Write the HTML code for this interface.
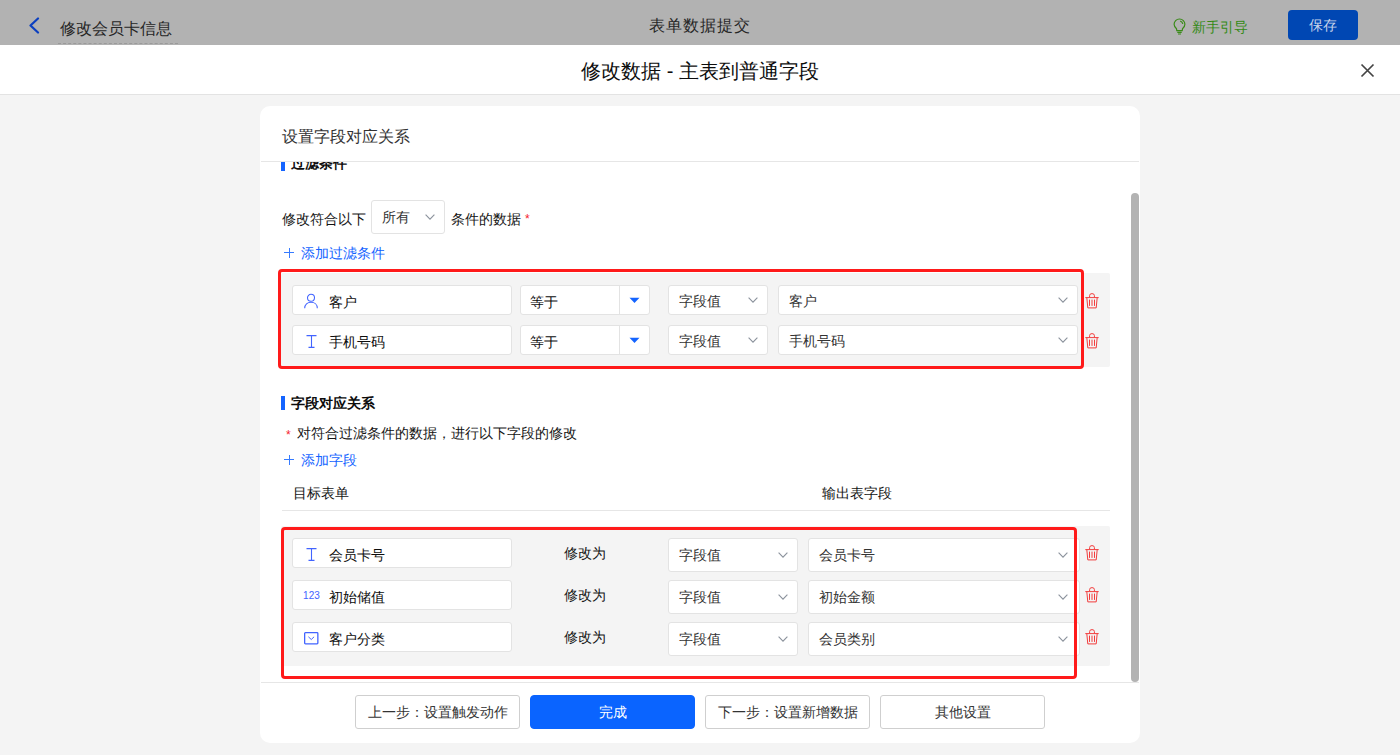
<!DOCTYPE html>
<html><head><meta charset="utf-8">
<style>
*{margin:0;padding:0;box-sizing:border-box}
html,body{width:1400px;height:755px;overflow:hidden;background:#f4f4f4;font-family:"Liberation Sans",sans-serif;color:#141414}
.a{position:absolute}
.t{position:absolute;white-space:nowrap;line-height:20px;font-size:14px}
#topbar{left:0;top:0;width:1400px;height:45px;background:#b2b2b2}
#mhead{left:0;top:45px;width:1400px;height:50px;background:#fff;border-bottom:1px solid #e3e3e3}
#card{left:260px;top:106px;width:880px;height:637px;background:#fff;border-radius:10px;overflow:hidden}
.inp{position:absolute;background:#fff;border:1px solid #e3e3e3;border-radius:3px;height:30px}
.sel{position:absolute;background:#fff;border:1px solid #e3e3e3;border-radius:3px;height:30px}
.rowbg{position:absolute;background:#f4f4f4;border-radius:2px}
.red{position:absolute;border:3px solid #ff1a1a;border-radius:4px}
.btn{position:absolute;top:695px;width:165px;height:34px;border:1px solid #cfcfcf;border-radius:3px;background:#fff;font-size:14px;line-height:32px;text-align:center;color:#333}
.blue{color:#1464ff}
</style></head><body>
<div id="topbar" class="a">
  <svg class="a" style="left:28px;top:17px" width="12" height="17" viewBox="0 0 12 17"><path d="M10 1.5 L2.5 8.5 L10 15.5" fill="none" stroke="#0b3fc0" stroke-width="2.2" stroke-linecap="round" stroke-linejoin="round"/></svg>
  <div class="t" style="left:60px;top:18px;font-size:16px;line-height:22px;color:#262626">修改会员卡信息</div>
  <div class="a" style="left:58px;top:43px;width:120px;border-top:1px dashed #9a9a9a"></div>
  <div class="t" style="left:649px;top:15px;font-size:16px;line-height:22px;letter-spacing:1px;color:#262626">表单数据提交</div>
  <svg class="a" style="left:1173px;top:18px" width="13" height="17" viewBox="0 0 13 17"><path d="M6.5 1 C3.4 1 1.1 3.4 1.1 6.3 C1.1 8.3 2.3 9.7 3.5 10.8 L3.8 12.6 L9.2 12.6 L9.5 10.8 C10.7 9.7 11.9 8.3 11.9 6.3 C11.9 3.4 9.6 1 6.5 1 Z M7.2 3.1 C8.6 3.5 9.6 4.6 9.8 6 M4.3 14.3 L8.7 14.3 M5 16 L8 16" fill="none" stroke="#3a8a18" stroke-width="1.2"/></svg>
  <div class="t" style="left:1192px;top:17px;color:#348a14">新手引导</div>
  <div class="a" style="left:1288px;top:10px;width:70px;height:30px;background:#0047b3;border-radius:4px;color:#c8d4ea;font-size:14px;line-height:30px;text-align:center">保存</div>
</div>
<div id="mhead" class="a">
  <div class="t" style="left:0;width:1400px;text-align:center;top:12px;font-size:20px;line-height:28px;color:#0d0d0d">修改数据 - 主表到普通字段</div>
  <svg class="a" style="left:1360px;top:18px" width="15" height="15" viewBox="0 0 15 15"><path d="M1.5 1.5 L13.5 13.5 M13.5 1.5 L1.5 13.5" stroke="#444" stroke-width="1.7"/></svg>
</div>
<div id="card" class="a">
  <div class="t" style="left:22px;top:19px;font-size:16px;line-height:24px;color:#333">设置字段对应关系</div>
  <div class="a" style="left:1px;top:55px;width:878px;height:1px;background:#e6e6e6"></div>
  <div class="a" style="left:1px;top:576px;width:878px;height:1px;background:#e6e6e6"></div>
</div>
<div class="a" style="left:260px;top:162px;width:880px;height:520px;overflow:hidden">
 <div class="a" style="left:-260px;top:-162px;width:1400px;height:755px">
  <div class="a" style="left:281px;top:157px;width:4px;height:14px;background:#1464ff"></div>
  <div class="t" style="left:291px;top:153px;font-weight:bold;color:#0d0d0d">过滤条件</div>
  <div class="t" style="left:282px;top:209px;color:#141414">修改符合以下</div>
  <div class="sel" style="left:371px;top:200px;width:74px;height:34px"></div>
  <div class="t" style="left:382px;top:207px;color:#333">所有</div>
  <svg class="a" style="left:425px;top:214px" width="10" height="6" viewBox="0 0 10 6"><path d="M0.6 0.6 L5.0 5.2 L9.4 0.6" fill="none" stroke="#8b929c" stroke-width="1.1"/></svg>
  <div class="t" style="left:451px;top:209px;color:#141414">条件的数据</div>
  <div class="t" style="left:525px;top:209px;color:#f5222d;font-size:12px">*</div>
  <svg class="a" style="left:284px;top:248px" width="11" height="10" viewBox="0 0 11 10"><path d="M0 4.5 H10 M5.5 0 V10" stroke="#1464ff" stroke-width="1" opacity="0.85"/></svg>
  <div class="t blue" style="left:301px;top:243px">添加过滤条件</div>
  <div class="rowbg" style="left:281px;top:273px;width:829px;height:94px"></div>
  <div class="inp" style="left:292px;top:285px;width:220px"></div>
  <svg class="a" style="left:303px;top:293px" width="16" height="16" viewBox="0 0 16 16"><circle cx="8" cy="4.8" r="3.5" fill="none" stroke="#4264ff" stroke-width="1.05"/><path d="M1.7 15.3 C1.7 11.6 4.4 9.3 8 9.3 C11.6 9.3 14.3 11.6 14.3 15.3" fill="none" stroke="#4264ff" stroke-width="1.05"/></svg>
  <div class="t" style="left:329px;top:292px;color:#0d0d0d">客户</div>
  <div class="sel" style="left:520px;top:285px;width:130px"></div>
  <div class="a" style="left:619px;top:286px;width:1px;height:28px;background:#e3e3e3"></div>
  <div class="t" style="left:530px;top:292px;color:#0d0d0d">等于</div>
  <svg class="a" style="left:629px;top:297px" width="11" height="7" viewBox="0 0 11 7"><path d="M0.5 0.8 H10.5 L5.5 6 Z" fill="#1464ff"/></svg>
  <div class="sel" style="left:668px;top:285px;width:100px"></div>
  <div class="t" style="left:679px;top:291px;color:#333">字段值</div>
  <svg class="a" style="left:748px;top:297px" width="10" height="6" viewBox="0 0 10 6"><path d="M0.6 0.6 L5.0 5.2 L9.4 0.6" fill="none" stroke="#8b929c" stroke-width="1.1"/></svg>
  <div class="sel" style="left:778px;top:285px;width:300px"></div>
  <div class="t" style="left:789px;top:291px;color:#333">客户</div>
  <svg class="a" style="left:1058px;top:297px" width="10" height="6" viewBox="0 0 10 6"><path d="M0.6 0.6 L5.0 5.2 L9.4 0.6" fill="none" stroke="#8b929c" stroke-width="1.1"/></svg>
  <svg class="a" style="left:1085px;top:293px" width="14" height="16" viewBox="0 0 14 16"><path d="M4.6 4.3 V2.6 Q4.6 0.6 7 0.6 Q9.4 0.6 9.4 2.6 V4.3 M0.3 4.6 H13.7 M1.8 4.6 L2.8 14.9 H11.2 L12.2 4.6 M4.5 6.6 V12.9 M7 6.6 V12.9 M9.5 6.6 V12.9" fill="none" stroke="#f23c3c" stroke-width="1"/></svg>
  <div class="inp" style="left:292px;top:325px;width:220px"></div>
  <svg class="a" style="left:306px;top:335px" width="11" height="14" viewBox="0 0 11 14"><path d="M0.5 0.6 H10.5 M5.5 0.6 V12.4 M2.5 12.4 H8.5" fill="none" stroke="#4264ff" stroke-width="1.1"/></svg>
  <div class="t" style="left:329px;top:332px;color:#0d0d0d">手机号码</div>
  <div class="sel" style="left:520px;top:325px;width:130px"></div>
  <div class="a" style="left:619px;top:326px;width:1px;height:28px;background:#e3e3e3"></div>
  <div class="t" style="left:530px;top:332px;color:#0d0d0d">等于</div>
  <svg class="a" style="left:629px;top:337px" width="11" height="7" viewBox="0 0 11 7"><path d="M0.5 0.8 H10.5 L5.5 6 Z" fill="#1464ff"/></svg>
  <div class="sel" style="left:668px;top:325px;width:100px"></div>
  <div class="t" style="left:679px;top:331px;color:#333">字段值</div>
  <svg class="a" style="left:748px;top:337px" width="10" height="6" viewBox="0 0 10 6"><path d="M0.6 0.6 L5.0 5.2 L9.4 0.6" fill="none" stroke="#8b929c" stroke-width="1.1"/></svg>
  <div class="sel" style="left:778px;top:325px;width:300px"></div>
  <div class="t" style="left:789px;top:331px;color:#333">手机号码</div>
  <svg class="a" style="left:1058px;top:337px" width="10" height="6" viewBox="0 0 10 6"><path d="M0.6 0.6 L5.0 5.2 L9.4 0.6" fill="none" stroke="#8b929c" stroke-width="1.1"/></svg>
  <svg class="a" style="left:1085px;top:333px" width="14" height="16" viewBox="0 0 14 16"><path d="M4.6 4.3 V2.6 Q4.6 0.6 7 0.6 Q9.4 0.6 9.4 2.6 V4.3 M0.3 4.6 H13.7 M1.8 4.6 L2.8 14.9 H11.2 L12.2 4.6 M4.5 6.6 V12.9 M7 6.6 V12.9 M9.5 6.6 V12.9" fill="none" stroke="#f23c3c" stroke-width="1"/></svg>
  <div class="red" style="left:278px;top:269px;width:806px;height:100px"></div>
  <div class="a" style="left:281px;top:396px;width:4px;height:14px;background:#1464ff"></div>
  <div class="t" style="left:291px;top:393px;font-weight:bold;color:#0d0d0d">字段对应关系</div>
  <div class="t" style="left:286px;top:425px;color:#f5222d;font-size:12px">*</div>
  <div class="t" style="left:297px;top:423px;color:#141414">对符合过滤条件的数据，进行以下字段的修改</div>
  <svg class="a" style="left:284px;top:455px" width="11" height="10" viewBox="0 0 11 10"><path d="M0 4.5 H10 M5.5 0 V10" stroke="#1464ff" stroke-width="1" opacity="0.85"/></svg>
  <div class="t blue" style="left:301px;top:450px">添加字段</div>
  <div class="t" style="left:293px;top:483px;color:#141414">目标表单</div>
  <div class="t" style="left:822px;top:483px;color:#141414">输出表字段</div>
  <div class="a" style="left:282px;top:510px;width:828px;height:1px;background:#e6e6e6"></div>
  <div class="rowbg" style="left:281px;top:526px;width:829px;height:140px"></div>
  <div class="inp" style="left:292px;top:538px;width:220px"></div>
  <svg class="a" style="left:306px;top:548px" width="11" height="14" viewBox="0 0 11 14"><path d="M0.5 0.6 H10.5 M5.5 0.6 V12.4 M2.5 12.4 H8.5" fill="none" stroke="#4264ff" stroke-width="1.1"/></svg>
  <div class="t" style="left:329px;top:545px;color:#0d0d0d">会员卡号</div>
  <div class="t" style="left:564px;top:543px;color:#141414">修改为</div>
  <div class="sel" style="left:668px;top:538px;width:130px;height:34px"></div>
  <div class="t" style="left:679px;top:545px;color:#333">字段值</div>
  <svg class="a" style="left:778px;top:552px" width="10" height="6" viewBox="0 0 10 6"><path d="M0.6 0.6 L5.0 5.2 L9.4 0.6" fill="none" stroke="#8b929c" stroke-width="1.1"/></svg>
  <div class="sel" style="left:808px;top:538px;width:272px;height:34px"></div>
  <div class="t" style="left:819px;top:545px;color:#333">会员卡号</div>
  <svg class="a" style="left:1058px;top:552px" width="10" height="6" viewBox="0 0 10 6"><path d="M0.6 0.6 L5.0 5.2 L9.4 0.6" fill="none" stroke="#8b929c" stroke-width="1.1"/></svg>
  <svg class="a" style="left:1085px;top:545px" width="14" height="16" viewBox="0 0 14 16"><path d="M4.6 4.3 V2.6 Q4.6 0.6 7 0.6 Q9.4 0.6 9.4 2.6 V4.3 M0.3 4.6 H13.7 M1.8 4.6 L2.8 14.9 H11.2 L12.2 4.6 M4.5 6.6 V12.9 M7 6.6 V12.9 M9.5 6.6 V12.9" fill="none" stroke="#f23c3c" stroke-width="1"/></svg>
  <div class="inp" style="left:292px;top:580px;width:220px"></div>
  <div class="t" style="left:303px;top:589px;font-size:10px;line-height:14px;letter-spacing:0.1px;color:#4264ff">123</div>
  <div class="t" style="left:329px;top:587px;color:#0d0d0d">初始储值</div>
  <div class="t" style="left:564px;top:585px;color:#141414">修改为</div>
  <div class="sel" style="left:668px;top:580px;width:130px;height:34px"></div>
  <div class="t" style="left:679px;top:587px;color:#333">字段值</div>
  <svg class="a" style="left:778px;top:594px" width="10" height="6" viewBox="0 0 10 6"><path d="M0.6 0.6 L5.0 5.2 L9.4 0.6" fill="none" stroke="#8b929c" stroke-width="1.1"/></svg>
  <div class="sel" style="left:808px;top:580px;width:272px;height:34px"></div>
  <div class="t" style="left:819px;top:587px;color:#333">初始金额</div>
  <svg class="a" style="left:1058px;top:594px" width="10" height="6" viewBox="0 0 10 6"><path d="M0.6 0.6 L5.0 5.2 L9.4 0.6" fill="none" stroke="#8b929c" stroke-width="1.1"/></svg>
  <svg class="a" style="left:1085px;top:587px" width="14" height="16" viewBox="0 0 14 16"><path d="M4.6 4.3 V2.6 Q4.6 0.6 7 0.6 Q9.4 0.6 9.4 2.6 V4.3 M0.3 4.6 H13.7 M1.8 4.6 L2.8 14.9 H11.2 L12.2 4.6 M4.5 6.6 V12.9 M7 6.6 V12.9 M9.5 6.6 V12.9" fill="none" stroke="#f23c3c" stroke-width="1"/></svg>
  <div class="inp" style="left:292px;top:622px;width:220px"></div>
  <svg class="a" style="left:304px;top:632px" width="15" height="13" viewBox="0 0 15 13"><rect x="0.65" y="0.65" width="13.2" height="11.2" rx="0.8" fill="none" stroke="#4264ff" stroke-width="1.3"/><path d="M4.4 4.8 L7.25 7.5 L10.1 4.8" fill="none" stroke="#4264ff" stroke-width="1"/></svg>
  <div class="t" style="left:329px;top:629px;color:#0d0d0d">客户分类</div>
  <div class="t" style="left:564px;top:627px;color:#141414">修改为</div>
  <div class="sel" style="left:668px;top:622px;width:130px;height:34px"></div>
  <div class="t" style="left:679px;top:629px;color:#333">字段值</div>
  <svg class="a" style="left:778px;top:636px" width="10" height="6" viewBox="0 0 10 6"><path d="M0.6 0.6 L5.0 5.2 L9.4 0.6" fill="none" stroke="#8b929c" stroke-width="1.1"/></svg>
  <div class="sel" style="left:808px;top:622px;width:272px;height:34px"></div>
  <div class="t" style="left:819px;top:629px;color:#333">会员类别</div>
  <svg class="a" style="left:1058px;top:636px" width="10" height="6" viewBox="0 0 10 6"><path d="M0.6 0.6 L5.0 5.2 L9.4 0.6" fill="none" stroke="#8b929c" stroke-width="1.1"/></svg>
  <svg class="a" style="left:1085px;top:629px" width="14" height="16" viewBox="0 0 14 16"><path d="M4.6 4.3 V2.6 Q4.6 0.6 7 0.6 Q9.4 0.6 9.4 2.6 V4.3 M0.3 4.6 H13.7 M1.8 4.6 L2.8 14.9 H11.2 L12.2 4.6 M4.5 6.6 V12.9 M7 6.6 V12.9 M9.5 6.6 V12.9" fill="none" stroke="#f23c3c" stroke-width="1"/></svg>
  <div class="red" style="left:281px;top:527px;width:796px;height:152px"></div>
 </div>
 <div class="a" style="left:871px;top:31px;width:8px;height:489px;background:#b3b3b3;border-radius:4px"></div>
</div>
<div class="btn" style="left:355px">上一步：设置触发动作</div>
<div class="btn" style="left:530px;background:#0a64ff;border-color:#0a64ff;color:#fff;border-radius:4px">完成</div>
<div class="btn" style="left:705px">下一步：设置新增数据</div>
<div class="btn" style="left:880px">其他设置</div>
</body></html>
